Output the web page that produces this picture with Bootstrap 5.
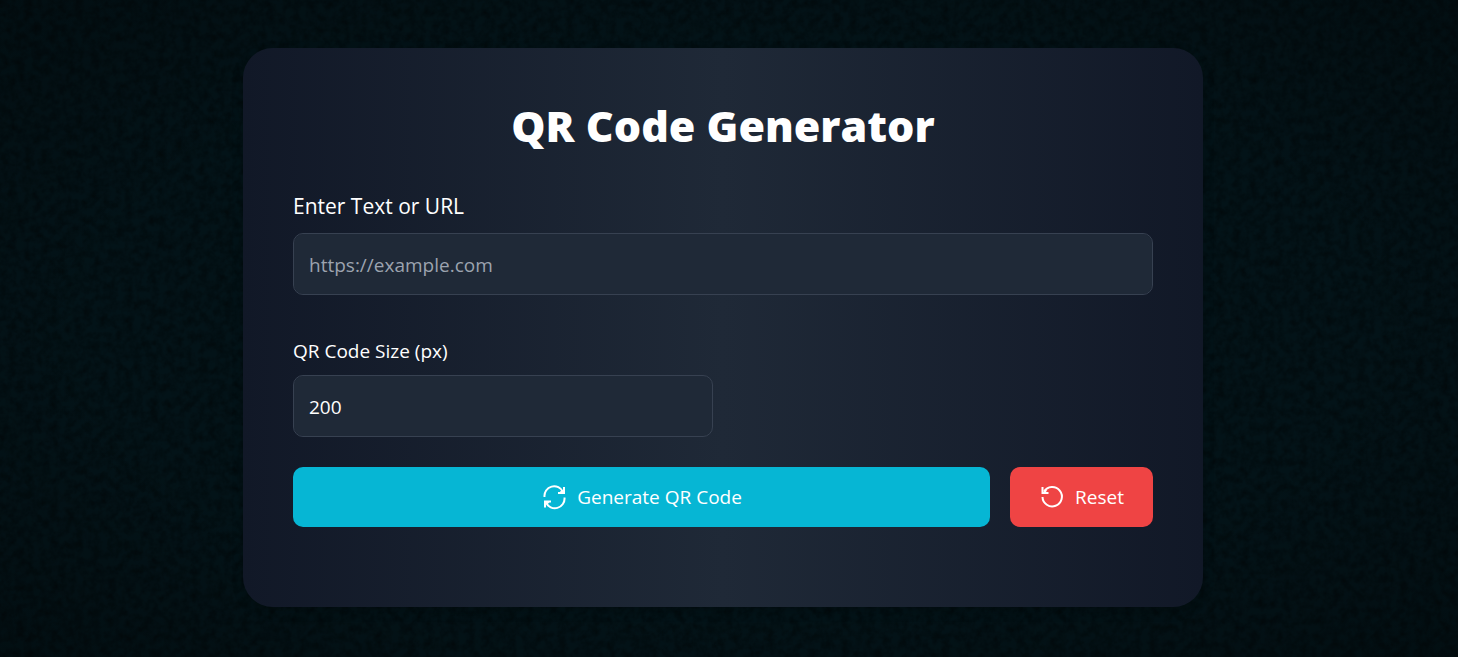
<!DOCTYPE html>
<html lang="en">
<head>
<meta charset="utf-8">
<meta name="viewport" content="width=device-width, initial-scale=1">
<title>QR Code Generator</title>
<link href="https://cdn.jsdelivr.net/npm/bootstrap@5.3.0/dist/css/bootstrap.min.css" rel="stylesheet">
<style>
  body {
    font-family: "Segoe UI", "Open Sans", "Noto Sans", sans-serif;
    font-size: 19px;
    line-height: 28px;
    color: #fff;
    padding-right: 12px;
    /* dark wall: vignette, fine grain, base tint */
    background:
      radial-gradient(ellipse at center, rgba(0,0,0,0) 60%, rgba(0,0,0,.25) 100%),
      url("data:image/svg+xml,%3Csvg xmlns='http://www.w3.org/2000/svg' width='1458' height='700'%3E%3Cfilter id='a' x='0' y='0' width='100%25' height='100%25'%3E%3CfeTurbulence type='fractalNoise' baseFrequency='.12' numOctaves='4' seed='4' stitchTiles='stitch'/%3E%3CfeColorMatrix values='0 0 0 0 0 0 0 0 0 0 0 0 0 0 0 .8 0 0 0 -.25'/%3E%3C/filter%3E%3Crect width='1458' height='700' filter='url(%23a)'/%3E%3C/svg%3E"),
      #031318;
  }
  .qr-page { padding: 48px 16px 50px; }
  .qr-panel {
    max-width: 960px;
    padding: 50px 50px 80px;
    border-radius: 30px;
    background: linear-gradient(to right, #111827, #1f2937, #111827);
    box-shadow: 0 4px 12px rgba(0,0,0,.2);
  }
  .qr-title { font-size: 43px; line-height: 56px; font-weight: 800; margin-bottom: 38px; }
  .qr-label { display: block; margin-bottom: 10px; }
  .qr-label-main { font-size: 21px; line-height: 28px; margin-bottom: 13px; }
  .qr-field, .qr-field:focus {
    height: 62px;
    padding: 2px 15px 0;
    font-size: 19px;
    color: #fff;
    background-color: #1f2937;
    border: 1px solid #374151;
    border-radius: 10px;
  }
  .qr-field::placeholder { color: #9ca3af; }
  .qr-size { width: 50%; padding-right: 10px; margin: 42px 0 30px; }
  .qr-actions { gap: 20px; }
  .qr-btn { height: 60px; padding: 0 29px 0 30px; gap: 10px; border: 0; border-radius: 10px; color: #fff; font-size: 19px; }
  .qr-btn svg { width: 25px; height: 25px; fill: none; stroke: currentColor; stroke-width: 2; }
  .qr-go, .qr-go:hover { background: #06b6d4; color: #fff; }
  .qr-reset, .qr-reset:hover { background: #ef4444; color: #fff; }
</style>
</head>
<body>
<main class="qr-page">
  <form class="qr-panel mx-auto">
    <h1 class="qr-title text-center">QR Code Generator</h1>
    <div>
      <label class="qr-label qr-label-main" for="text">Enter Text or URL</label>
      <input class="form-control qr-field" id="text" type="text" placeholder="https://example.com">
    </div>
    <div class="qr-size">
      <label class="qr-label" for="size">QR Code Size (px)</label>
      <input class="form-control qr-field" id="size" type="text" inputmode="numeric" value="200">
    </div>
    <div class="d-flex qr-actions">
      <button class="btn qr-btn qr-go flex-grow-1 d-flex align-items-center justify-content-center" type="button">
        <svg viewBox="0 0 25 25" aria-hidden="true">
          <path d="M2.500 12A9.700 9.700 0 0 1 21 7M22.500 12.500A9.700 9.700 0 0 1 4 17.500"/>
          <path d="M22 2V8H16M3 22.500V16.500H9"/>
          <path d="M20 4.500L22 8L17 8ZM5 20L3 16.500L8 16.500Z" fill="currentColor" stroke="none"/>
        </svg>
        Generate QR Code
      </button>
      <button class="btn qr-btn qr-reset d-flex align-items-center justify-content-center" type="reset">
        <svg viewBox="0 0 25 25" aria-hidden="true">
          <path d="M2.500 12A9.700 9.700 0 1 0 4 6.500"/>
          <path d="M2.500 2V8H8.500"/>
          <path d="M2.500 8L5.500 4.500L7 5L5.500 8Z" fill="currentColor" stroke="none"/>
        </svg>
        Reset
      </button>
    </div>
  </form>
</main>
<script src="https://cdn.jsdelivr.net/npm/bootstrap@5.3.0/dist/js/bootstrap.bundle.min.js"></script>
</body>
</html>
